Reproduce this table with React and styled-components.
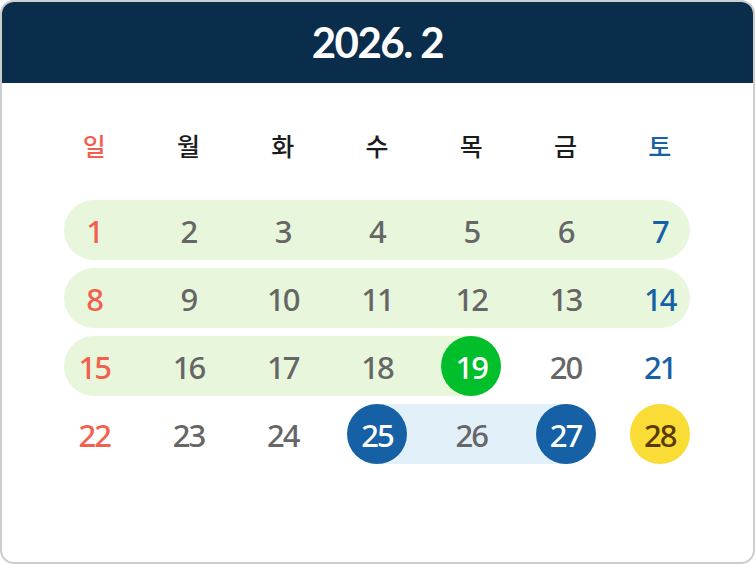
import React from 'react';
import styled, {createGlobalStyle} from 'styled-components';

const GlobalStyle = createGlobalStyle`
  html, body {
    margin: 0;
    padding: 0;
    background: #ffffff;
  }
  body {
    font-family: Lato, "Noto Sans", "Noto Sans CJK KR", sans-serif;
  }
`;

const WEEKDAYS = ['일', '월', '화', '수', '목', '금', '토'];

// band: columns it covers, and whether each end is a rounded cap or stops at a cell centre
const WEEKS = [
    {days: [1, 2, 3, 4, 5, 6, 7], band: {from: 1, to: 8, kind: 'green', left: true, right: true}},
    {days: [8, 9, 10, 11, 12, 13, 14], band: {from: 1, to: 8, kind: 'green', left: true, right: true}},
    {days: [15, 16, 17, 18, 19, 20, 21], band: {from: 1, to: 6, kind: 'green', left: true, right: false}},
    {days: [22, 23, 24, 25, 26, 27, 28], band: {from: 4, to: 7, kind: 'blue', left: false, right: false}},
];

const MARKS = {
    19: 'green',
    25: 'blue',
    27: 'blue',
    28: 'yellow',
};

const App = () => {
    return (
        <>
            <GlobalStyle/>
            <Card>
                <Header>
                    <Title>2026. 2</Title>
                </Header>
                <Body>
                    <WeekRow>
                        {WEEKDAYS.map((w, i) => (
                            <WeekdayCell key={w} tone={i === 0 ? 'sun' : i === 6 ? 'sat' : 'plain'}>
                                {w}
                            </WeekdayCell>
                        ))}
                    </WeekRow>
                    <Weeks>
                        {WEEKS.map((week, wi) => (
                            <WeekRow key={wi}>
                                {week.band && (
                                    <Band
                                        kind={week.band.kind}
                                        roundLeft={week.band.left}
                                        roundRight={week.band.right}
                                        style={{gridColumn: `${week.band.from} / ${week.band.to}`}}
                                    />
                                )}
                                {week.days.map((d, di) => (
                                    <DayCell key={d} style={{gridColumn: di + 1}}>
                                        <Day
                                            mark={MARKS[d]}
                                            tone={di === 0 ? 'sun' : di === 6 ? 'sat' : 'plain'}
                                        >
                                            {d}
                                        </Day>
                                    </DayCell>
                                ))}
                            </WeekRow>
                        ))}
                    </Weeks>
                </Body>
            </Card>
        </>
    );
};

export default App;

const Card = styled.div`
  width: 755px;
  height: 564px;
  box-sizing: border-box;
  border: 2px solid #cdcdcd;
  border-radius: 14px;
  overflow: hidden;
  background: #ffffff;
  display: flex;
  flex-direction: column;
`;

const Header = styled.div`
  height: 83px;
  margin: -2px -2px 0;
  background: #0b2d4c;
  display: flex;
  align-items: center;
  justify-content: center;
`;

const Title = styled.div`
  color: #ffffff;
  font-family: Lato, "Noto Sans", sans-serif;
  font-weight: 700;
  font-size: 42px;
  letter-spacing: -1.5px;
  padding-top: 1px;
`;

const Body = styled.div`
  padding: 32px 46px 0 45px;
  display: flex;
  flex-direction: column;
  gap: 25px;
`;

const Weeks = styled.div`
  display: flex;
  flex-direction: column;
  gap: 8px;
`;

const WeekRow = styled.div`
  display: grid;
  grid-template-columns: repeat(7, 1fr);
  grid-template-rows: 60px;
  align-items: stretch;
`;

const toneColor = {
    sun: '#f2604f',
    sat: '#1661a5',
    plain: '#666666',
};

const WeekdayCell = styled.div`
  display: flex;
  align-items: center;
  justify-content: center;
  font-family: "Noto Sans CJK KR", "Noto Sans", sans-serif;
  font-size: 25px;
  font-weight: 500;
  color: ${({tone}) => (tone === 'plain' ? '#1c1c1c' : toneColor[tone])};
`;

const Band = styled.div`
  grid-row: 1;
  background: ${({kind}) => (kind === 'blue' ? '#e2f0fa' : '#e8f7dc')};
  margin-left: ${({roundLeft}) => (roundLeft ? '17px' : '47px')};
  margin-right: ${({roundRight}) => (roundRight ? '17px' : '47px')};
  border-radius: ${({roundLeft, roundRight}) =>
    `${roundLeft ? 30 : 0}px ${roundRight ? 30 : 0}px ${roundRight ? 30 : 0}px ${roundLeft ? 30 : 0}px`};
`;

const DayCell = styled.div`
  grid-row: 1;
  display: flex;
  align-items: center;
  justify-content: center;
`;

const markBg = {
    green: '#00bf2a',
    blue: '#1661a5',
    yellow: '#f9dc36',
};

const Day = styled.div`
  width: 60px;
  height: 60px;
  border-radius: 50%;
  display: flex;
  align-items: center;
  justify-content: center;
  font-family: "Noto Sans", Lato, sans-serif;
  font-size: 31px;
  font-weight: 500;
  letter-spacing: -2px;
  padding-top: 2px;
  box-sizing: border-box;
  background: ${({mark}) => (mark ? markBg[mark] : 'transparent')};
  color: ${({mark, tone}) =>
    mark === 'yellow' ? '#5b3a06' : mark ? '#ffffff' : toneColor[tone]};
`;
